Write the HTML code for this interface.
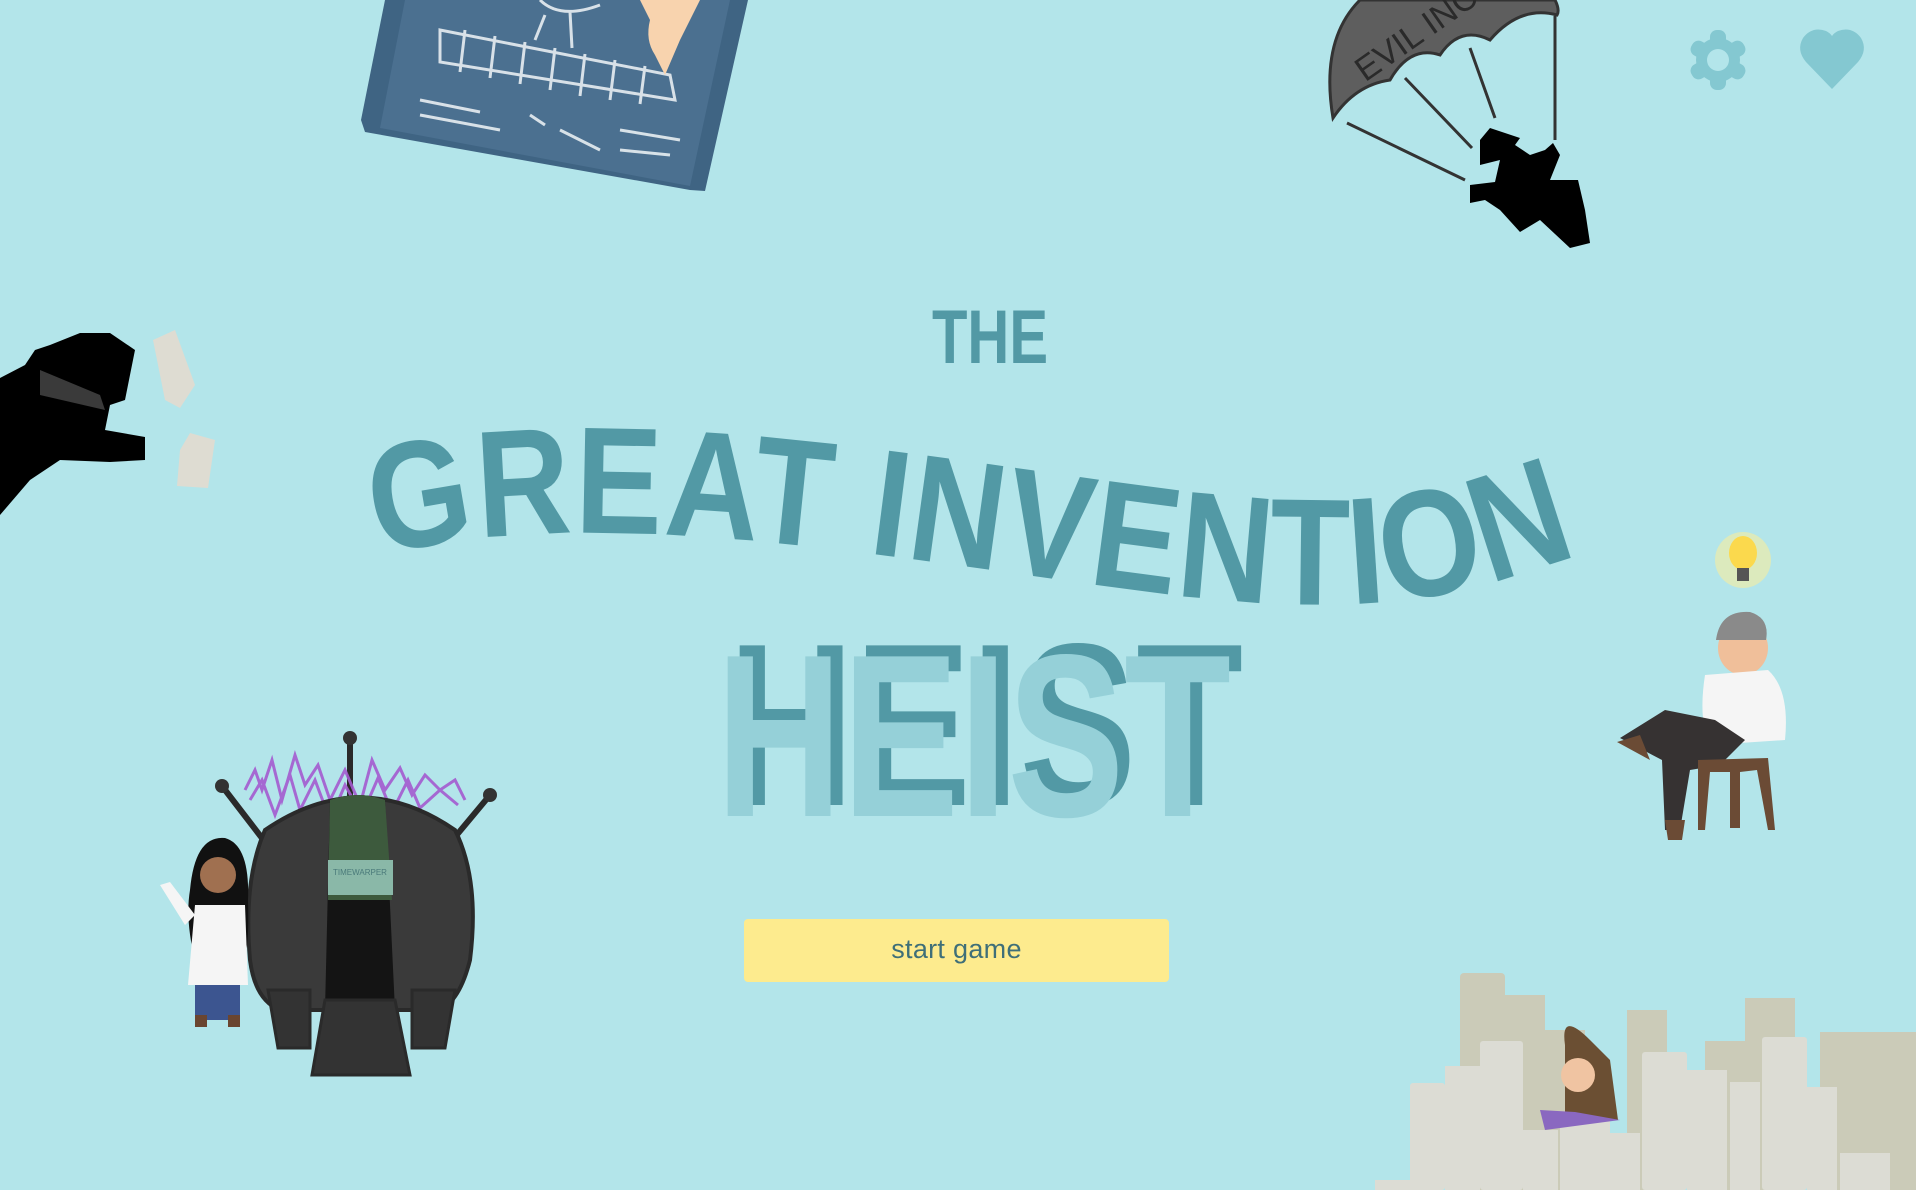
<!DOCTYPE html>
<html><head><meta charset="utf-8"><style>
html,body{margin:0;padding:0}
body{width:1916px;height:1190px;background:#b3e5ea;overflow:hidden;position:relative;font-family:"Liberation Sans",sans-serif}
svg{position:absolute;left:0;top:0}
.btn{position:absolute;left:744px;top:919px;width:425px;height:63px;background:#fdeb8e;border-radius:4px;color:#3f6f78;font-size:27px;text-align:center;line-height:61px;letter-spacing:0.3px}
</style></head><body>
<svg width="1916" height="1190" viewBox="0 0 1916 1190">
<!-- blueprint -->
<path d="M385 0 L748 0 L705 191 L690 190 L365 132 L361 120 Z" fill="#3f6483"/>
<path d="M405 0 L730 0 L690 186 L380 128 Z" fill="#4b7090"/>
<g stroke="#e8eef2" stroke-width="3" fill="none" opacity="0.9">
<path d="M440 30 L670 75 L675 100 L440 62 Z"/>
<path d="M465 30 L460 72 M495 36 L490 78 M525 42 L520 84 M555 48 L550 90 M585 54 L580 96 M615 60 L610 100 M645 66 L640 104"/>
<path d="M540 0 Q560 20 600 5 M545 15 L535 40 M570 12 L572 48 M530 115 L545 125 M420 100 L480 112 M420 115 L500 130 M560 130 L600 150 M620 130 L680 140 M620 150 L670 155"/>
</g>
<path d="M640 0 L700 0 L680 40 L665 75 L655 55 Q645 40 650 20 Z" fill="#f8d3ae"/>
<!-- parachute -->
<path d="M1333 118 Q1320 40 1360 0 L1555 0 Q1560 10 1557 15 Q1520 5 1490 40 Q1460 25 1440 55 Q1410 45 1390 80 Q1355 85 1333 118 Z" fill="#5e5e5e" stroke="#333" stroke-width="3"/>
<text x="1355" y="70" font-size="34" fill="#2a2a2a" transform="rotate(-35 1380 60)" font-family="Liberation Sans">EVIL INC</text>
<g stroke="#333" stroke-width="3" fill="none">
<path d="M1347 123 L1465 180 M1405 78 L1472 148 M1470 48 L1495 118 M1555 16 L1555 140"/>
</g>
<path d="M1480 140 L1490 128 L1520 138 L1515 145 L1530 155 L1545 150 L1553 143 L1560 155 L1550 180 L1578 180 L1585 210 L1590 243 L1570 248 L1540 220 L1520 232 L1500 210 L1485 200 L1470 203 L1470 185 L1495 182 L1500 160 L1480 165 Z" fill="#000"/>
<!-- left spy -->
<path d="M0 378 L25 365 L35 350 L50 345 L80 333 L110 333 L135 350 L125 400 L110 405 L105 430 L145 437 L145 460 L110 462 L60 460 L30 480 L0 515 Z" fill="#000"/>
<path d="M40 370 L100 395 L105 410 L40 395 Z" fill="#3a3a3a"/>
<path d="M153 340 L175 330 L195 385 L180 408 L165 400 Z" fill="#dedcd2"/>
<path d="M190 433 L215 440 L208 488 L177 486 L180 450 Z" fill="#dedcd2"/>
<!-- title -->
<text x="932" y="363" font-size="76" font-weight="bold" fill="#5299a5" textLength="116" lengthAdjust="spacingAndGlyphs">THE</text>
<path id="arc" d="M378 556 C 600 500 900 560 1150 592 S 1470 590 1600 548" fill="none"/>
<text font-size="152" fill="#5299a5" font-weight="bold" style="letter-spacing:2px"><textPath href="#arc" textLength="1215" lengthAdjust="spacingAndGlyphs">GREAT INVENTION</textPath></text>
<text x="728" y="805" font-size="232" font-weight="bold" fill="#5299a5" textLength="515" lengthAdjust="spacingAndGlyphs">HEIST</text>
<text x="716" y="816" font-size="232" font-weight="bold" fill="#95d0d8" textLength="515" lengthAdjust="spacingAndGlyphs">HEIST</text>
<!-- gear -->
<g fill="#84c8d1">
<circle cx="1718" cy="60" r="22"/>
<g transform="translate(1718 60)">
<rect x="-8" y="-30" width="16" height="60" rx="7"/>
<rect x="-8" y="-30" width="16" height="60" rx="7" transform="rotate(60)"/>
<rect x="-8" y="-30" width="16" height="60" rx="7" transform="rotate(120)"/>
</g>
<path d="M1832 89 L1806 62 Q1796 50 1803 38 Q1812 26 1826 31 Q1830 33 1832 36 Q1834 33 1838 31 Q1852 26 1861 38 Q1868 50 1858 62 Z"/>
</g>
<circle cx="1718" cy="60" r="11" fill="#b3e5ea"/>
<!-- machine -->
<g stroke="#2a2a2a" stroke-width="6" stroke-linecap="round">
<path d="M222 786 L275 855 M490 795 L440 855 M350 740 L350 810"/>
</g>
<circle cx="222" cy="786" r="7" fill="#333"/><circle cx="490" cy="795" r="7" fill="#333"/><circle cx="350" cy="738" r="7" fill="#333"/>
<g fill="none" stroke="#a45bd0" stroke-width="3" opacity="0.9">
<path d="M245 790 L255 770 L262 790 L272 760 L282 800 L295 755 L305 785 L318 765 L330 800 L345 770 L360 805 L372 760 L385 790 L400 768 L412 795 L425 775 L440 790 L455 780 L465 800"/>
<path d="M250 800 L262 780 L275 815 L290 775 L300 810 L315 780 L330 820 L345 785 L362 815 L378 778 L392 812 L408 780 L420 808 L440 790 L458 805"/>
</g>
<path d="M265 830 Q360 765 455 830 Q480 880 470 960 Q460 1000 440 1010 L280 1010 Q255 1000 250 960 Q243 880 265 830 Z" fill="#3a3a3a" stroke="#2a2a2a" stroke-width="4"/>
<path d="M330 800 Q358 790 385 800 L395 1010 L325 1010 Z" fill="#141414"/>
<path d="M330 800 Q358 790 385 800 L392 900 L328 900 Z" fill="#3d5a3d"/>
<rect x="328" y="860" width="65" height="35" fill="#8ab8a8"/>
<text x="333" y="875" font-size="8" fill="#4a7a7a">TIMEWARPER</text>
<path d="M268 990 L310 990 L310 1048 L278 1048 Z M412 990 L455 990 L445 1048 L412 1048 Z" fill="#333" stroke="#2a2a2a" stroke-width="3"/>
<path d="M325 1000 L395 1000 L410 1075 L312 1075 Z" fill="#333" stroke="#2a2a2a" stroke-width="3"/>
<!-- girl -->
<path d="M190 890 Q195 835 225 838 Q250 845 248 900 Q250 960 240 960 L195 960 Q185 920 190 890 Z" fill="#111"/>
<path d="M195 905 L245 905 L248 985 L188 985 Z" fill="#f5f5f5"/>
<path d="M160 885 L170 882 L195 915 L185 925 Z" fill="#f5f5f5"/>
<circle cx="218" cy="875" r="18" fill="#a07050"/>
<rect x="195" y="985" width="45" height="35" fill="#3c5590"/>
<rect x="195" y="1015" width="12" height="12" fill="#6a4530"/><rect x="228" y="1015" width="12" height="12" fill="#6a4530"/>
<!-- man -->
<circle cx="1743" cy="560" r="28" fill="#f6ec9f" opacity="0.6"/>
<ellipse cx="1743" cy="553" rx="14" ry="17" fill="#fbd94d"/>
<rect x="1737" y="568" width="12" height="13" fill="#555"/>
<ellipse cx="1743" cy="648" rx="25" ry="27" fill="#f0bf9a"/>
<path d="M1716 640 Q1720 610 1750 612 Q1770 618 1766 640 Z" fill="#8a8a8a"/>
<path d="M1705 675 L1768 670 Q1790 690 1785 740 L1710 745 Q1698 720 1705 675 Z" fill="#f5f5f5"/>
<path d="M1620 738 L1665 710 L1715 720 L1745 740 L1720 765 L1690 770 L1680 830 L1665 830 L1662 760 Z" fill="#363232"/>
<path d="M1617 742 L1640 735 L1650 760 Z M1665 820 L1685 820 L1682 840 L1668 840 Z" fill="#6b4b35"/>
<path d="M1698 760 L1768 758 L1775 830 L1768 830 L1757 770 L1740 772 L1740 828 L1730 828 L1730 772 L1710 772 L1705 830 L1698 830 Z" fill="#6b4b35"/>
<!-- city -->
<g fill="#cbcbb8">
<rect x="1460" y="973" width="45" height="217" rx="4"/>
<rect x="1505" y="995" width="40" height="195"/>
<rect x="1545" y="1030" width="40" height="160"/>
<rect x="1627" y="1010" width="40" height="180"/>
<rect x="1705" y="1041" width="40" height="149"/>
<rect x="1745" y="998" width="50" height="192"/>
<rect x="1820" y="1032" width="96" height="158"/>
</g>
<g fill="#dcdcd4">
<rect x="1375" y="1180" width="40" height="10"/>
<rect x="1410" y="1083" width="35" height="107" rx="3"/>
<rect x="1445" y="1066" width="35" height="124"/>
<rect x="1480" y="1041" width="43" height="149" rx="3"/>
<rect x="1523" y="1130" width="35" height="60"/>
<rect x="1560" y="1118" width="50" height="72"/>
<rect x="1610" y="1133" width="30" height="57"/>
<rect x="1642" y="1052" width="45" height="138" rx="3"/>
<rect x="1687" y="1070" width="40" height="120"/>
<rect x="1730" y="1082" width="30" height="108"/>
<rect x="1762" y="1037" width="45" height="153" rx="3"/>
<rect x="1807" y="1087" width="30" height="103"/>
<rect x="1840" y="1153" width="50" height="37"/>
</g>
<path d="M1565 1045 Q1560 1010 1590 1040 L1610 1060 L1618 1120 L1565 1118 Z" fill="#6b4f33"/>
<circle cx="1578" cy="1075" r="17" fill="#f0c4a2"/>
<path d="M1540 1110 L1575 1112 L1620 1120 L1545 1130 Z" fill="#8a68c0"/>
</svg>
<div class="btn">start game</div>
</body></html>
